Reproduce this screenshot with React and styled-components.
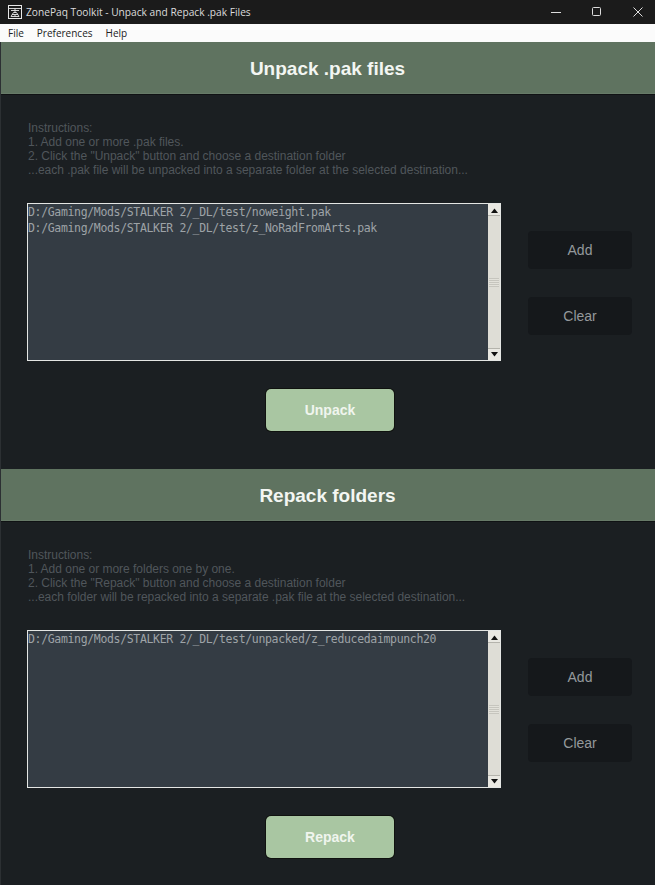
import React from "react";
import styled, { createGlobalStyle } from "styled-components";

const Global = createGlobalStyle`
  html, body { margin: 0; padding: 0; background: #1b1f22; }
  body { width: 655px; height: 885px; overflow: hidden; font-family: "Liberation Sans", Arial, sans-serif; }
`;
const Window = styled.div`width: 655px; height: 885px; display: flex; flex-direction: column; background: #1b1f22; overflow: hidden;`;
const TitleBar = styled.div`height: 24px; flex: none; background: #1b1b1b; display: flex; align-items: center; padding-left: 8px; color: #dcdcdc; font: 10.2px "Open Sans", sans-serif;`;
const TitleText = styled.span`margin-left: 4px; flex: 1; white-space: nowrap;`;
const WinButton = styled.div`width: 41px; height: 24px; flex: none; display: flex; align-items: center; justify-content: center;`;
const CloseButton = styled(WinButton)`width: 34px; margin-left: 4px;`;
const MenuBar = styled.div`height: 18px; flex: none; background: #fbfbfb; display: flex; align-items: center; padding-left: 8px; gap: 13px; color: #222; font: 10px "Open Sans", sans-serif;`;
const Section = styled.section`height: 427px; flex: none; display: flex; flex-direction: column; border-left: 1px solid #2c3033; box-sizing: border-box;`;
const Header = styled.h1`margin: 0; height: 52px; flex: none; box-sizing: border-box; padding: 1px 1px 0 0; background: #5f7360; color: #f3f6f2; display: flex; align-items: center; justify-content: center; font: bold 19px "Liberation Sans", sans-serif; box-shadow: 0 1px 0 #101214, inset 0 -1px 0 #677a68;`;
const Instructions = styled.div`margin: 27px 0 0 27px; height: 56px; font-size: 12px; line-height: 14px; letter-spacing: -.02px; color: #50565b; white-space: pre;`;
const Row = styled.div`margin: 26px 23px 0 26px; display: flex; align-items: flex-start; justify-content: space-between;`;
const ListBox = styled.div`width: 474px; height: 158px; box-sizing: border-box; border: 1px solid #e4e6e4; background: #343c44; display: flex;`;
const Paths = styled.div`flex: 1; color: #9ea3a7; font: 11.5px/16px "DejaVu Sans Mono", monospace; letter-spacing: -.34px; white-space: nowrap; overflow: hidden;`;
const Scrollbar = styled.div`width: 12px; flex: none; background: #deddd6; display: flex; flex-direction: column; align-items: center; justify-content: space-between;`;
const ArrowBox = styled.div`width: 12px; height: 12px; background: #e9e8e2; display: flex; align-items: center; justify-content: center; box-shadow: inset 0 -1px 0 #b4b3ac;`;
const DownBox = styled(ArrowBox)`box-shadow: inset 0 1px 0 #b4b3ac;`;
const Thumb = styled.div`width: 10px; height: 9px; background: repeating-linear-gradient(#c6c5be 0 1px, #e2e1da 1px 2px);`;
const Side = styled.div`display: flex; flex-direction: column; gap: 28px; margin-top: 28px;`;
const SideButton = styled.div`width: 104px; height: 38px; border-radius: 4px; background: #15181b; color: #94989b; display: flex; align-items: center; justify-content: center; font-size: 14px;`;
const Action = styled.div`width: 128px; height: 42px; border-radius: 5px; background: #a9c6a2; color: #f0f5ee; display: flex; align-items: center; justify-content: center; font: bold 14px "Liberation Sans", sans-serif; margin: 28px 0 0 265px; box-shadow: 0 0 0 1px #10120f;`;

const Arrow = ({ down }) => (
  <svg width="7" height="5" viewBox="0 0 7 5"><path d={down ? "M0 0h7L3.5 4.5z" : "M3.5 .5L7 5H0z"} fill="#111" /></svg>
);

const Block = ({ title, instructions, paths, action }) => (
  <Section>
    <Header>{title}</Header>
    <Instructions>{instructions.join("\n")}</Instructions>
    <Row>
      <ListBox>
        <Paths>{paths.map(p => <div key={p}>{p}</div>)}</Paths>
        <Scrollbar>
          <ArrowBox><Arrow /></ArrowBox>
          <Thumb />
          <DownBox><Arrow down /></DownBox>
        </Scrollbar>
      </ListBox>
      <Side>
        <SideButton>Add</SideButton>
        <SideButton>Clear</SideButton>
      </Side>
    </Row>
    <Action>{action}</Action>
  </Section>
);

export default function App() {
  return (
    <Window>
      <Global />
      <TitleBar>
        <svg width="14" height="14" viewBox="0 0 14 14" fill="none" stroke="#e8e8e8">
          <rect x=".5" y=".5" width="13" height="13" />
          <path d="M.5 3.5h13M3 5.5h8M7 3.5v4M3 11.5l2.5-4h3l2.5 4M4 9.5h6M7 9.5v2M3 11.5h8" strokeWidth=".9" />
        </svg>
        <TitleText>ZonePaq Toolkit - Unpack and Repack .pak Files</TitleText>
        <WinButton>
          <svg width="10" height="10" viewBox="0 0 10 10"><path d="M0 5.5h10" stroke="#ddd" /></svg>
        </WinButton>
        <WinButton>
          <svg width="10" height="10" viewBox="0 0 10 10"><rect x=".5" y=".5" width="8" height="8" rx="1" fill="none" stroke="#ddd" /></svg>
        </WinButton>
        <CloseButton>
          <svg width="10" height="10" viewBox="0 0 10 10"><path d="M.5.5l9 9M9.5.5l-9 9" stroke="#ddd" /></svg>
        </CloseButton>
      </TitleBar>
      <MenuBar><span>File</span><span>Preferences</span><span>Help</span></MenuBar>
      <Block
        title="Unpack .pak files"
        action="Unpack"
        instructions={[
          "Instructions:",
          "1. Add one or more .pak files.",
          '2. Click the "Unpack" button and choose a destination folder',
          "...each .pak file will be unpacked into a separate folder at the selected destination...",
        ]}
        paths={["D:/Gaming/Mods/STALKER 2/_DL/test/noweight.pak", "D:/Gaming/Mods/STALKER 2/_DL/test/z_NoRadFromArts.pak"]}
      />
      <Block
        title="Repack folders"
        action="Repack"
        instructions={[
          "Instructions:",
          "1. Add one or more folders one by one.",
          '2. Click the "Repack" button and choose a destination folder',
          "...each folder will be repacked into a separate .pak file at the selected destination...",
        ]}
        paths={["D:/Gaming/Mods/STALKER 2/_DL/test/unpacked/z_reducedaimpunch20"]}
      />
    </Window>
  );
}
